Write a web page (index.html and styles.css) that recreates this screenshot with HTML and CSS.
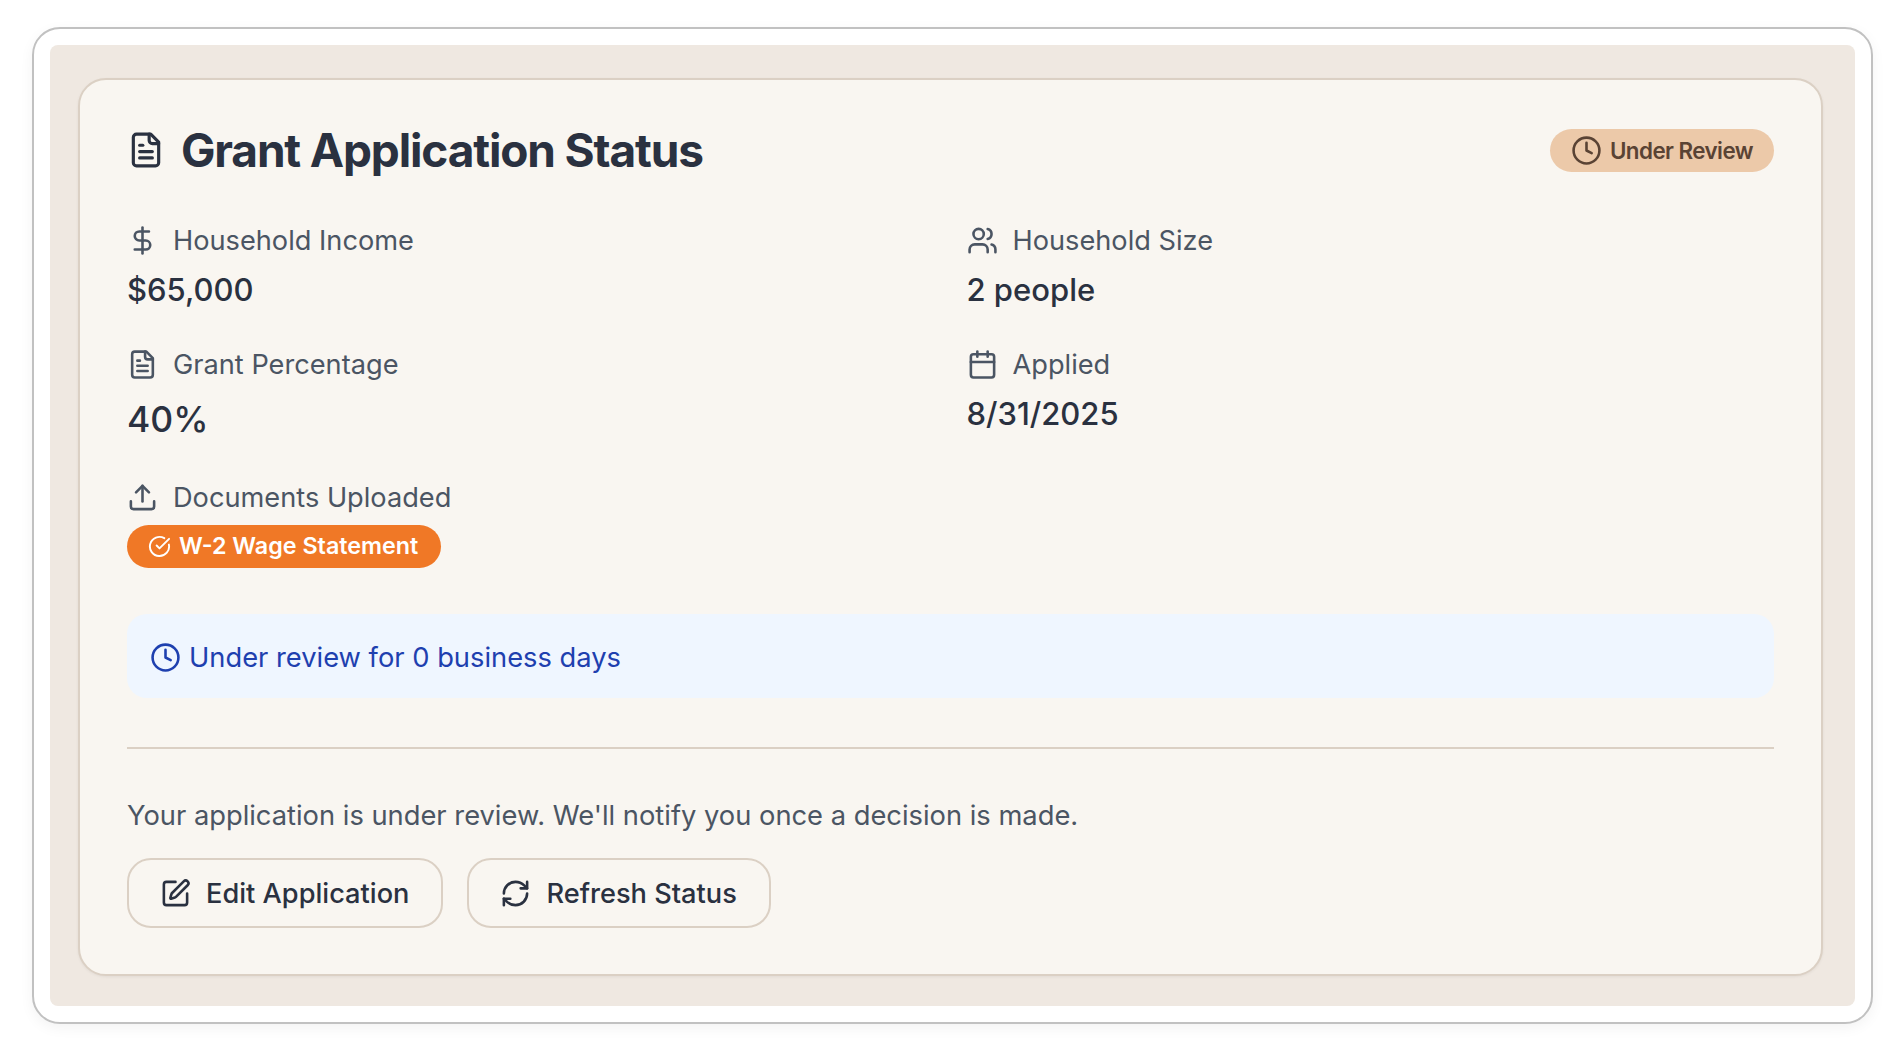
FILE: index.html
```html
<!DOCTYPE html>
<html lang="en">
<head>
  <meta charset="UTF-8" />
  <title>Grant Application Status</title>
  <link rel="stylesheet" href="styles.css">
</head>
<body>
  <div class="frame">
    <div class="backdrop">
      <div class="card">
        <!-- Header -->
        <div class="card-head">
          <h1 class="title">
            <svg class="icon icon-title" viewBox="0 0 24 24"><path d="M15 2H6a2 2 0 0 0-2 2v16a2 2 0 0 0 2 2h12a2 2 0 0 0 2-2V7Z"/><path d="M14 2v4a2 2 0 0 0 2 2h4"/><path d="M10 9H8"/><path d="M16 13H8"/><path d="M16 17H8"/></svg>
            Grant Application Status
          </h1>
          <span class="status-badge">
            <svg class="icon" viewBox="0 0 24 24"><circle cx="12" cy="12" r="10"/><polyline points="12 6 12 12 16 14"/></svg>
            Under Review
          </span>
        </div>

        <!-- Details -->
        <div class="details">
          <div class="field">
            <div class="field-label">
              <svg class="icon" viewBox="0 0 24 24"><line x1="12" x2="12" y1="2" y2="22"/><path d="M17 5H9.5a3.5 3.5 0 0 0 0 7h5a3.5 3.5 0 0 1 0 7H6"/></svg>
              Household Income
            </div>
            <div class="field-value">$65,000</div>
          </div>
          <div class="field">
            <div class="field-label">
              <svg class="icon" viewBox="0 0 24 24"><path d="M16 21v-2a4 4 0 0 0-4-4H6a4 4 0 0 0-4 4v2"/><circle cx="9" cy="7" r="4"/><path d="M22 21v-2a4 4 0 0 0-3-3.87"/><path d="M16 3.13a4 4 0 0 1 0 7.75"/></svg>
              Household Size
            </div>
            <div class="field-value">2 people</div>
          </div>
          <div class="field">
            <div class="field-label">
              <svg class="icon" viewBox="0 0 24 24"><path d="M15 2H6a2 2 0 0 0-2 2v16a2 2 0 0 0 2 2h12a2 2 0 0 0 2-2V7Z"/><path d="M14 2v4a2 2 0 0 0 2 2h4"/><path d="M10 9H8"/><path d="M16 13H8"/><path d="M16 17H8"/></svg>
              Grant Percentage
            </div>
            <div class="field-value field-value-lg">40%</div>
          </div>
          <div class="field">
            <div class="field-label">
              <svg class="icon" viewBox="0 0 24 24"><path d="M8 2v4"/><path d="M16 2v4"/><rect width="18" height="18" x="3" y="4" rx="2"/><path d="M3 10h18"/></svg>
              Applied
            </div>
            <div class="field-value">8/31/2025</div>
          </div>
        </div>

        <!-- Documents -->
        <div class="documents">
          <div class="field-label">
            <svg class="icon" viewBox="0 0 24 24"><path d="M21 15v4a2 2 0 0 1-2 2H5a2 2 0 0 1-2-2v-4"/><polyline points="17 8 12 3 7 8"/><line x1="12" x2="12" y1="3" y2="15"/></svg>
            Documents Uploaded
          </div>
          <span class="doc-pill">
            <svg class="icon icon-pill" viewBox="0 0 24 24"><path d="M21.801 10A10 10 0 1 1 17 3.335"/><path d="m9 11 3 3L22 4"/></svg>
            W-2 Wage Statement
          </span>
        </div>

        <!-- Review notice -->
        <div class="notice">
          <svg class="icon icon-notice" viewBox="0 0 24 24"><circle cx="12" cy="12" r="10"/><polyline points="12 6 12 12 16 14"/></svg>
          Under review for 0 business days
        </div>

        <!-- Footer -->
        <div class="card-foot">
          <p class="foot-text">Your application is under review. We'll notify you once a decision is made.</p>
          <div class="actions">
            <button class="btn">
              <svg class="icon" viewBox="0 0 24 24"><path d="M12 3H5a2 2 0 0 0-2 2v14a2 2 0 0 0 2 2h14a2 2 0 0 0 2-2v-7"/><path d="M18.375 2.625a1 1 0 0 1 3 3l-9.013 9.014a2 2 0 0 1-.853.505l-2.873.84a.5.5 0 0 1-.62-.62l.84-2.873a2 2 0 0 1 .506-.852z"/></svg>
              Edit Application
            </button>
            <button class="btn">
              <svg class="icon" viewBox="0 0 24 24"><path d="M3 12a9 9 0 0 1 9-9 9.75 9.75 0 0 1 6.74 2.74L21 8"/><path d="M21 3v5h-5"/><path d="M21 12a9 9 0 0 1-9 9 9.75 9.75 0 0 1-6.74-2.74L3 16"/><path d="M8 16H3v5"/></svg>
              Refresh Status
            </button>
          </div>
        </div>
      </div>
    </div>
  </div>
</body>
</html>
```

FILE: styles.css
```css
* { box-sizing: border-box; }
body {
  margin: 0;
  padding: 27px 29px 31px 32px;
  font-family: Inter, 'Liberation Sans', sans-serif;
  background: #fff;
}

.frame {
  height: 997px;
  padding: 16px;
  background: #fff;
  border: 2px solid #c1c1c1;
  border-radius: 28px;
  box-shadow: 0 4px 14px rgba(0,0,0,0.05);
}

.backdrop {
  height: 961px;
  padding: 33px 32px 0 28px;
  background: #efe8e1;
  border-radius: 8px;
}

.card {
  height: 898px;
  padding: 47px 47px 0;
  background: #f9f6f1;
  border: 2px solid #dbd0c4;
  border-radius: 28px;
  box-shadow: 0 1px 3px rgba(0,0,0,0.06);
}

.icon {
  width: 31px;
  height: 31px;
  flex-shrink: 0;
  fill: none;
  stroke: currentColor;
  stroke-width: 2;
  stroke-linecap: round;
  stroke-linejoin: round;
}

.card-head {
  display: flex;
  align-items: center;
  justify-content: space-between;
  height: 46px;
}
.title {
  display: flex;
  align-items: center;
  gap: 16px;
  margin: 0;
  font-size: 46px;
  font-weight: 700;
  letter-spacing: -0.025em;
  color: #2a3140;
}
.icon-title {
  width: 38px;
  height: 38px;
}
.status-badge {
  display: flex;
  align-items: center;
  gap: 8px;
  height: 43px;
  padding: 0 21px;
  border-radius: 22px;
  background: #ecc9a9;
  color: #5a4334;
  font-size: 22.4px;
  font-weight: 600;
  letter-spacing: -0.025em;
}

.details {
  display: grid;
  grid-template-columns: 1fr 1fr;
  column-gap: 32px;
  row-gap: 40px;
  margin-top: 51px;
}
.field-label {
  display: flex;
  align-items: center;
  gap: 15px;
  height: 32px;
  font-size: 27.2px;
  color: #4b5563;
}
.field-value {
  margin-top: 16px;
  height: 36px;
  line-height: 36px;
  font-size: 31px;
  font-weight: 500;
  color: #2a3140;
}
.field-value-lg {
  height: 46px;
  line-height: 46px;
  margin-top: 17px;
  font-size: 35.5px;
}

.documents {
  margin-top: 38px;
}
.doc-pill {
  display: inline-flex;
  align-items: center;
  gap: 8px;
  height: 43px;
  margin-top: 12px;
  padding: 0 23px 2px 21px;
  border-radius: 22px;
  background: #f07826;
  color: #fff;
  font-size: 23.3px;
  font-weight: 600;
}
.icon-pill {
  width: 23px;
  height: 23px;
  margin-top: 2px;
}

.notice {
  display: flex;
  align-items: center;
  gap: 8px;
  height: 84px;
  margin-top: 46px;
  padding: 2px 23px 0;
  border-radius: 20px;
  background: #eff6ff;
  color: #1e40af;
  font-size: 27.3px;
}
.icon-notice {
  width: 31px;
  height: 31px;
}

.card-foot {
  margin-top: 49px;
  padding-top: 49px;
  border-top: 2px solid #dbd0c4;
}
.foot-text {
  margin: 0;
  font-size: 27.3px;
  line-height: 36px;
  color: #4b5563;
}
.actions {
  display: flex;
  gap: 24px;
  margin-top: 24px;
}
.btn {
  display: flex;
  align-items: center;
  gap: 15px;
  height: 70px;
  padding: 0 32px 0 31px;
  background: none;
  border: 2px solid #dbd0c4;
  border-radius: 24px;
  font-family: inherit;
  font-size: 27.2px;
  font-weight: 500;
  color: #2a3140;
  cursor: pointer;
}
```
